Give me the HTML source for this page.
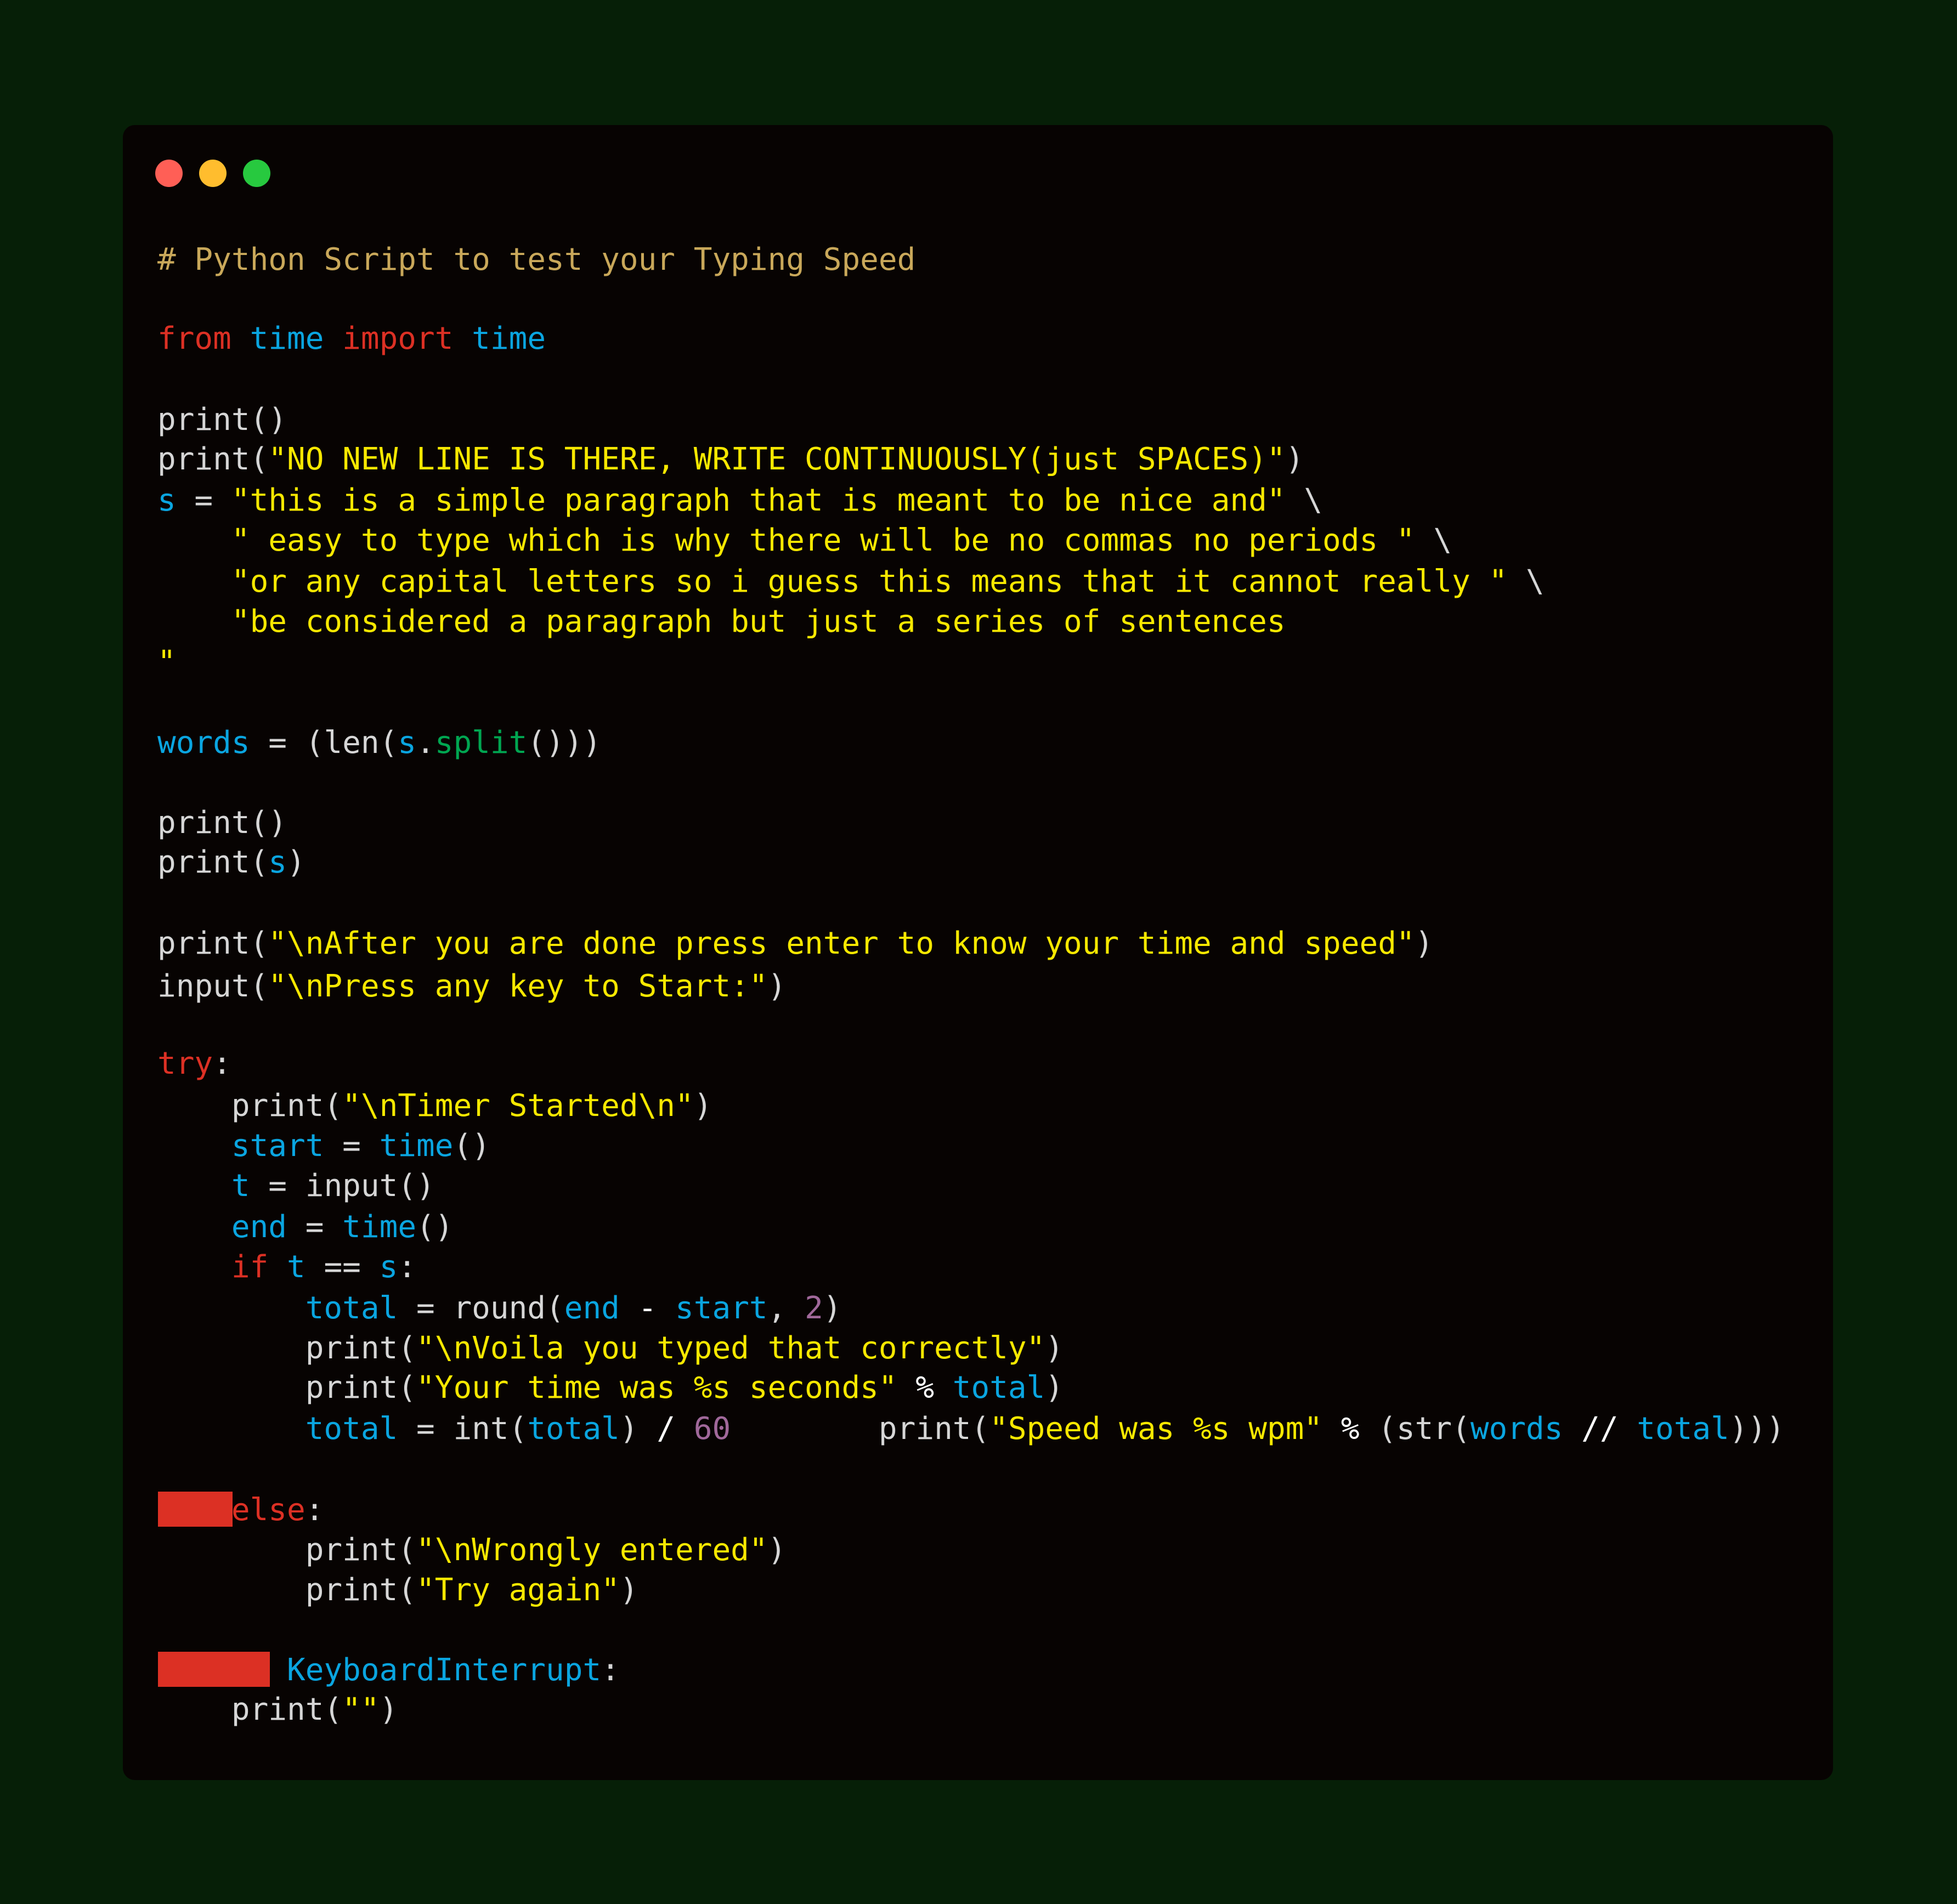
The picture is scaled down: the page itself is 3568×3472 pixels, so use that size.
<!DOCTYPE html>
<html><head><meta charset="utf-8"><style>
html,body{margin:0;padding:0}
body{width:3568px;height:3472px;background:#061f07;position:relative;overflow:hidden}
.win{position:absolute;left:224px;top:228px;width:3118px;height:3018px;background:#070302;border-radius:22px}
.dot{position:absolute;width:50px;height:50px;border-radius:50%;top:291px}
.l{position:absolute;left:287px;font-family:"DejaVu Sans Mono","Liberation Mono",monospace;font-size:56px;line-height:74px;white-space:pre;color:#d6d6d6}
.c{color:#c9a85a}.k{color:#dc3024}.b{color:#0aa5e0}.y{color:#f7e800}.g{color:#00a651}.n{color:#a0689a}.w{color:#fff}
.box{position:absolute;background:#dc3024}
</style></head><body>
<div class="win"></div>
<div class="dot" style="left:283px;background:#ff5f56"></div>
<div class="dot" style="left:363px;background:#ffbd2e"></div>
<div class="dot" style="left:443px;background:#27c93f"></div>
<div class="box" style="left:288px;top:2720px;width:136px;height:64px"></div>
<div class="box" style="left:288px;top:3012px;width:204px;height:64px"></div>
<div class="l c" style="top:437px"># Python Script to test your Typing Speed</div>
<div class="l" style="top:581px"><span class="k">from</span> <span class="b">time</span> <span class="k">import</span> <span class="b">time</span></div>
<div class="l" style="top:729px">print()</div>
<div class="l" style="top:801px">print(<span class="y">"NO NEW LINE IS THERE, WRITE CONTINUOUSLY(just SPACES)"</span>)</div>
<div class="l" style="top:876px"><span class="b">s</span> = <span class="y">"this is a simple paragraph that is meant to be nice and"</span> \</div>
<div class="l" style="top:949px">    <span class="y">" easy to type which is why there will be no commas no periods "</span> \</div>
<div class="l" style="top:1024px">    <span class="y">"or any capital letters so i guess this means that it cannot really "</span> \</div>
<div class="l" style="top:1097px">    <span class="y">"be considered a paragraph but just a series of sentences</span></div>
<div class="l y" style="top:1171px">"</div>
<div class="l" style="top:1318px"><span class="b">words</span> = (len(<span class="b">s</span>.<span class="g">split</span>()))</div>
<div class="l" style="top:1464px">print()</div>
<div class="l" style="top:1536px">print(<span class="b">s</span>)</div>
<div class="l" style="top:1684px">print(<span class="y">"\nAfter you are done press enter to know your time and speed"</span>)</div>
<div class="l" style="top:1762px">input(<span class="y">"\nPress any key to Start:"</span>)</div>
<div class="l" style="top:1903px"><span class="k">try</span>:</div>
<div class="l" style="top:1980px">    print(<span class="y">"\nTimer Started\n"</span>)</div>
<div class="l" style="top:2053px">    <span class="b">start</span> = <span class="b">time</span>()</div>
<div class="l" style="top:2126px">    <span class="b">t</span> = input()</div>
<div class="l" style="top:2201px">    <span class="b">end</span> = <span class="b">time</span>()</div>
<div class="l" style="top:2274px">    <span class="k">if</span> <span class="b">t</span> == <span class="b">s</span>:</div>
<div class="l" style="top:2349px">        <span class="b">total</span> = round(<span class="b">end</span> <span class="w">-</span> <span class="b">start</span>, <span class="n">2</span>)</div>
<div class="l" style="top:2422px">        print(<span class="y">"\nVoila you typed that correctly"</span>)</div>
<div class="l" style="top:2494px">        print(<span class="y">"Your time was %s seconds"</span> <span class="w">%</span> <span class="b">total</span>)</div>
<div class="l" style="top:2569px">        <span class="b">total</span> = int(<span class="b">total</span>) <span class="w">/</span> <span class="n">60</span>        print(<span class="y">"Speed was %s wpm"</span> <span class="w">%</span> (str(<span class="b">words</span> <span class="w">//</span> <span class="b">total</span>)))</div>
<div class="l" style="top:2717px">    <span class="k">else</span>:</div>
<div class="l" style="top:2790px">        print(<span class="y">"\nWrongly entered"</span>)</div>
<div class="l" style="top:2863px">        print(<span class="y">"Try again"</span>)</div>
<div class="l" style="top:3009px">       <span class="b">KeyboardInterrupt</span>:</div>
<div class="l" style="top:3081px">    print(<span class="y">""</span>)</div>
</body></html>
